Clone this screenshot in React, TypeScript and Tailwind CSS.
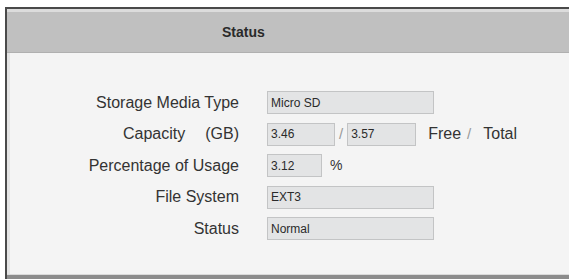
const font = { fontFamily: '"Liberation Sans", Arial, sans-serif' }

const Field = ({ value, width }: { value: string; width: string }) => (
  <div
    className={`${width} h-[23px] bg-[#e3e4e5] border border-[#c3c4c5] flex items-center pl-[3px] text-[12px] text-[#2a2a2a]`}
  >
    {value}
  </div>
)

const Row = ({ label, children }: { label: React.ReactNode; children: React.ReactNode }) => (
  <div className="flex items-center h-[23px]">
    <div className="w-[229px] text-right text-[16px] text-[#333]">{label}</div>
    <div className="ml-[28px] flex items-center">{children}</div>
  </div>
)

export default function App() {
  return (
    <div className="w-[570px] h-[279px] bg-white overflow-hidden" style={font}>
      <div className="ml-[5px] mt-[7px] w-[564px] h-[272px] border-l-2 border-t-2 border-[#4a4a4a] flex flex-col">
        <div className="h-[44px] bg-[#c0c0c0] border-t-[3px] border-[#dcdcdc] border-b border-b-[#b0b0b0] flex items-center pl-[215px]">
          <span className="text-[14px] font-bold text-[#2a2a2a]">Status</span>
        </div>
        <div className="flex-1 bg-[#f4f4f4] border-l-[3px] border-[#e4e4e4] pt-[38px] flex flex-col gap-[8.5px]">
          <Row label="Storage Media Type">
            <Field value="Micro SD" width="w-[167px]" />
          </Row>
          <Row
            label={
              <>
                Capacity<span className="ml-[20px]">(GB)</span>
              </>
            }
          >
            <Field value="3.46" width="w-[68px]" />
            <span className="mx-[4px] text-[15px] text-[#9a9a9a]">/</span>
            <Field value="3.57" width="w-[69px]" />
            <span className="ml-[12px] text-[16px] text-[#333]">Free</span>
            <span className="ml-[6px] text-[15px] text-[#9a9a9a]">/</span>
            <span className="ml-[12px] text-[16px] text-[#333]">Total</span>
          </Row>
          <Row label="Percentage of Usage">
            <Field value="3.12" width="w-[55px]" />
            <span className="ml-[8px] text-[14px] text-[#333]">%</span>
          </Row>
          <Row label="File System">
            <Field value="EXT3" width="w-[167px]" />
          </Row>
          <Row label="Status">
            <Field value="Normal" width="w-[167px]" />
          </Row>
        </div>
        <div className="h-[1px] bg-[#dadada]" />
        <div className="h-[4px] bg-[#8c8c8c]" />
      </div>
    </div>
  )
}
